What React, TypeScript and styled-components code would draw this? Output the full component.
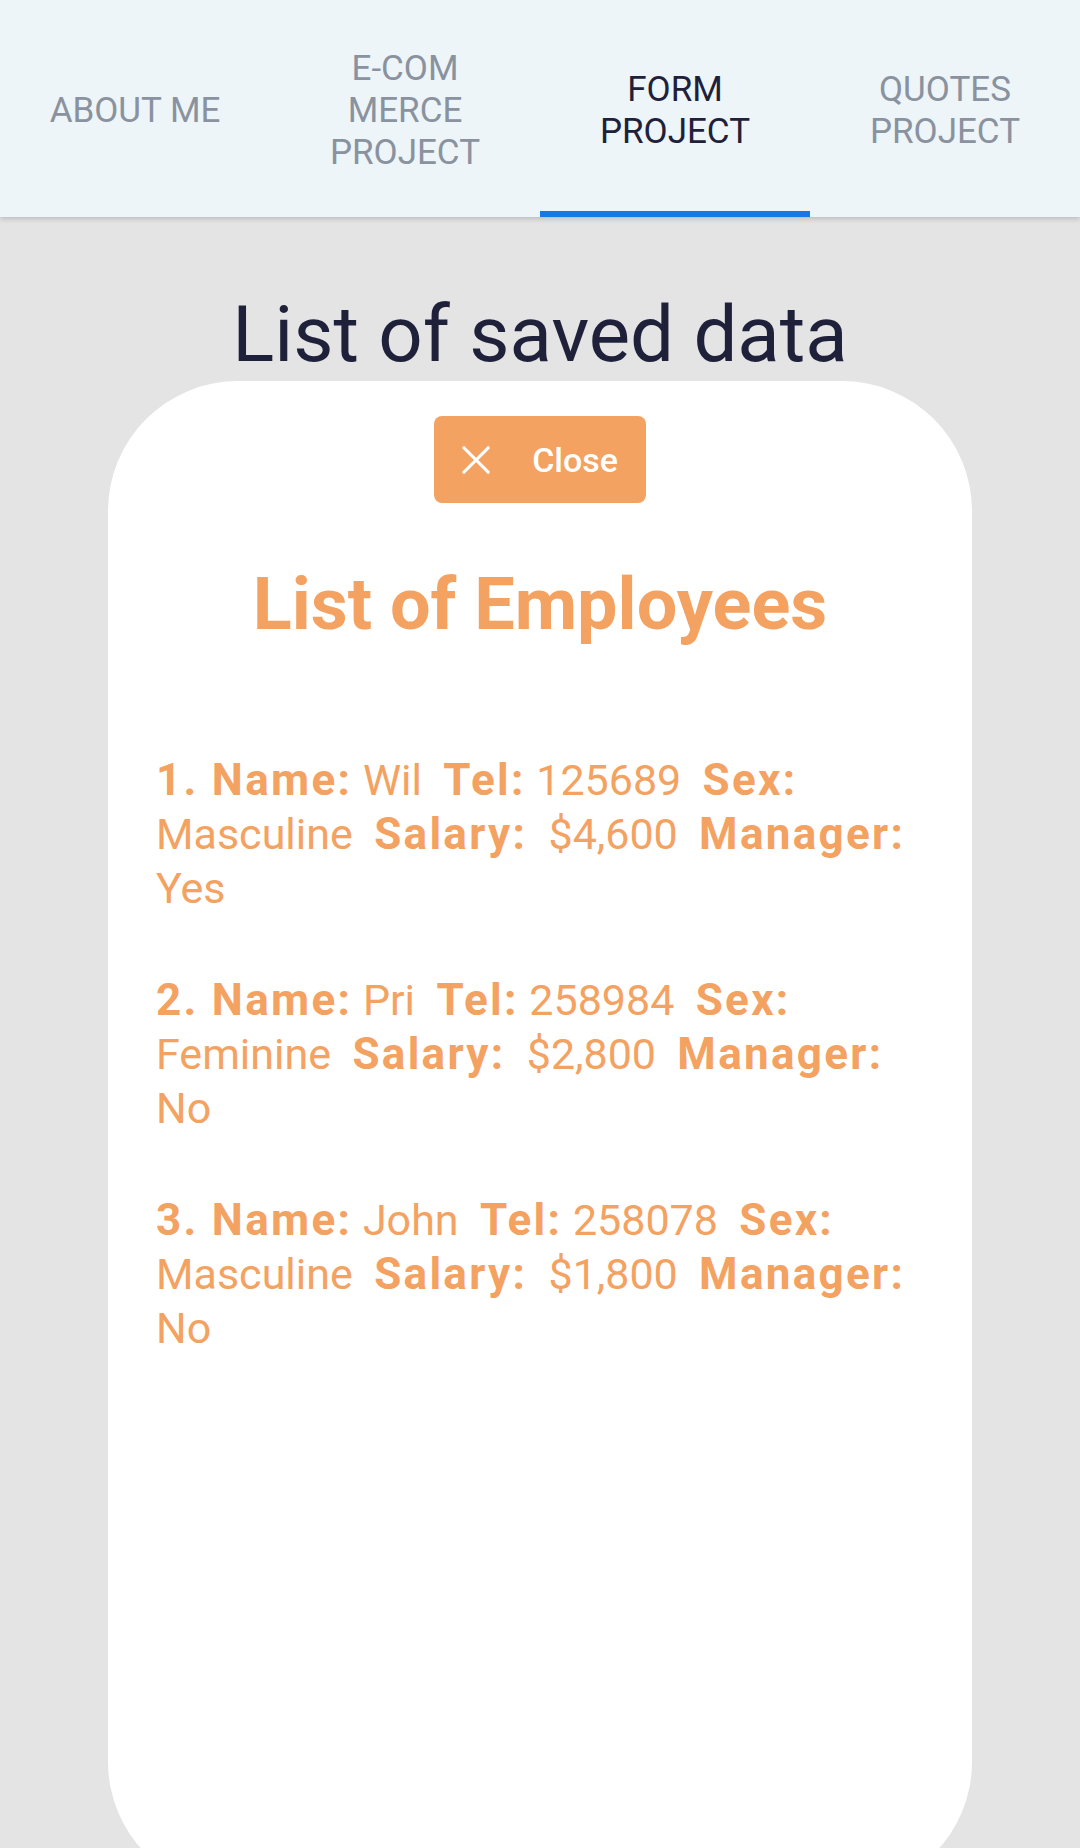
import styled, { createGlobalStyle } from 'styled-components';

const GlobalStyle = createGlobalStyle`
  html, body {
    margin: 0;
    padding: 0;
    background: #e4e4e4;
    font-family: Roboto, "Liberation Sans", Arial, sans-serif;
  }
`;

const Page = styled.div`
  min-height: 1848px;
  background: #e4e4e4;
`;

const TabBar = styled.nav`
  display: flex;
  height: 217px;
  background: #edf5f9;
  box-shadow: 0 2px 5px rgba(0, 0, 0, 0.18);
  position: relative;
  z-index: 1;
`;

const Tab = styled.div<{ $active?: boolean }>`
  flex: 1;
  display: flex;
  align-items: center;
  justify-content: center;
  text-align: center;
  font-size: 35px;
  line-height: 42px;
  text-transform: uppercase;
  color: ${(p) => (p.$active ? '#1e2139' : '#8a929f')};
  box-sizing: border-box;
  border-bottom: 6px solid ${(p) => (p.$active ? '#1479e6' : 'transparent')};
  padding-top: 11px;
`;

const Title = styled.h1`
  margin: 72px 0 1px;
  text-align: center;
  font-size: 78px;
  font-weight: 400;
  line-height: 91px;
  color: #1e2139;
`;

const Card = styled.section`
  margin: 0 108px;
  height: 1511px;
  background: #fff;
  border-radius: 130px;
  padding: 35px 48px 0;
  box-sizing: border-box;
  display: flex;
  flex-direction: column;
  align-items: center;
`;

const CloseButton = styled.button`
  display: inline-flex;
  align-items: center;
  gap: 42px;
  height: 87px;
  width: 212px;
  padding: 0 28px;
  box-sizing: border-box;
  border: none;
  border-radius: 8px;
  background: #f4a261;
  color: #fff;
  font-family: Roboto, "Liberation Sans", Arial, sans-serif;
  font-size: 34px;
  font-weight: 500;
`;

const Heading = styled.h2`
  margin: 60px 0 106px;
  font-size: 72px;
  font-weight: 700;
  line-height: 84px;
  color: #f4a261;
`;

const List = styled.ol`
  list-style: none;
  margin: 0;
  padding: 0;
  align-self: stretch;
  display: flex;
  flex-direction: column;
  gap: 58px;
`;

const Row = styled.li`
  font-size: 43px;
  line-height: 54px;
  color: #f4a261;
`;

const Key = styled.strong`
  font-size: 44px;
  font-weight: 700;
  letter-spacing: 2.3px;
`;

interface Employee {
  name: string;
  tel: string;
  sex: string;
  salary: string;
  manager: string;
}

const employees: Employee[] = [
  { name: 'Wil', tel: '125689', sex: 'Masculine', salary: '$4,600', manager: 'Yes' },
  { name: 'Pri', tel: '258984', sex: 'Feminine', salary: '$2,800', manager: 'No' },
  { name: 'John', tel: '258078', sex: 'Masculine', salary: '$1,800', manager: 'No' },
];

const gap = '\u00a0 ';

const App = () => {
  return (
    <Page>
      <GlobalStyle />
      <TabBar>
        <Tab>About me</Tab>
        <Tab>
          E-COM
          <br />
          MERCE
          <br />
          PROJECT
        </Tab>
        <Tab $active>
          Form
          <br />
          Project
        </Tab>
        <Tab>
          Quotes
          <br />
          Project
        </Tab>
      </TabBar>
      <Title>List of saved data</Title>
      <Card>
        <CloseButton>
          <svg width="30" height="30" viewBox="0 0 30 30">
            <path d="M1 1 29 29M29 1 1 29" stroke="#fff" strokeWidth="3.2" fill="none" />
          </svg>
          Close
        </CloseButton>
        <Heading>List of Employees</Heading>
        <List>
          {employees.map((e, i) => (
            <Row key={e.tel}>
              <Key>{i + 1}. Name:</Key> {e.name}
              {gap}
              <Key>Tel:</Key> {e.tel}
              {gap}
              <Key>Sex:</Key> {e.sex}
              {gap}
              <Key>Salary:</Key>
              {gap}
              {e.salary}
              {gap}
              <Key>Manager:</Key> {e.manager}
            </Row>
          ))}
        </List>
      </Card>
    </Page>
  );
};

export default App;
